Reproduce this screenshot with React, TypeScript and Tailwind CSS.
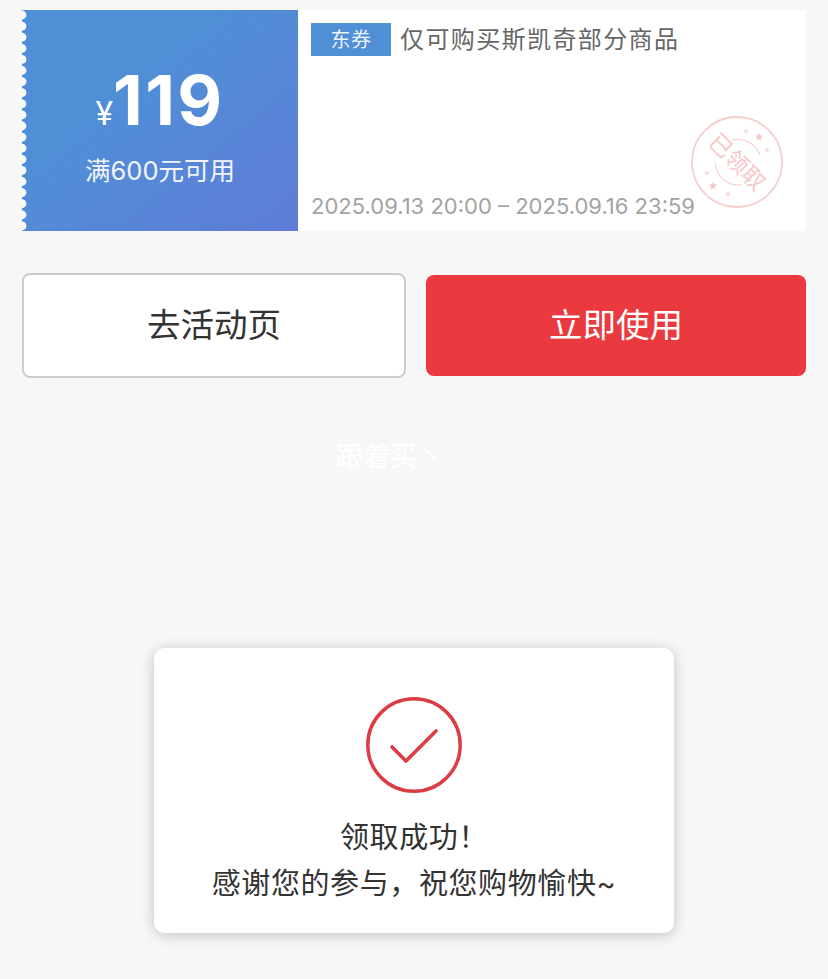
const cjk = "font-['Inter','Noto_Sans_CJK_SC',sans-serif]";

function Scallops() {
  // little bites down the left edge of the coupon
  const bites = Array.from({ length: 20 }, (_, i) => 5 + i * 11.1);
  return (
    <svg className="absolute left-0 top-0 h-[221px] w-[6px]" viewBox="0 0 6 221">
      {bites.map((y) => (
        <circle key={y} cx="0" cy={y} r="4.4" fill="#fafafa" />
      ))}
    </svg>
  );
}

function Star({ x, y, r, fill }: { x: number; y: number; r: number; fill: string }) {
  const pts = Array.from({ length: 10 }, (_, i) => {
    const a = (Math.PI / 5) * i - Math.PI / 2;
    const d = i % 2 === 0 ? r : r * 0.45;
    return `${x + d * Math.cos(a)},${y + d * Math.sin(a)}`;
  }).join(" ");
  return <polygon points={pts} fill={fill} />;
}

function Stamp() {
  return (
    <div className="absolute left-[393px] top-[106px] h-[92px] w-[92px]">
      <svg className="absolute inset-0" width="92" height="92" viewBox="0 0 92 92" fill="none">
        <circle cx="46" cy="46" r="45" stroke="#f6cfcf" strokeWidth="1.8" />
        <path d="M41 24a24 24 0 0 1 28 15" stroke="#f6d3d3" strokeWidth="1.2" />
        <path d="M24 47a24 24 0 0 0 27 22" stroke="#f6d3d3" strokeWidth="1.2" />
        <Star x={55} y={15} r={3} fill="#f8d8d8" />
        <Star x={68} y={21} r={4.5} fill="#f6c9c9" />
        <Star x={76} y={34} r={3} fill="#f8d8d8" />
        <Star x={16} y={57} r={3} fill="#f8d8d8" />
        <Star x={22} y={70} r={4.5} fill="#f6c9c9" />
        <Star x={37} y={78} r={3} fill="#f8d8d8" />
      </svg>
      <div className="absolute inset-0 flex rotate-45 items-center justify-center text-[23px] leading-none text-[#f6c8c8]">
        已领取
      </div>
    </div>
  );
}

export default function App() {
  return (
    <div className={`relative h-[979px] w-[828px] overflow-hidden bg-[#f7f7f7] ${cjk}`}>
      <div className="px-[22px] pt-[10px]">
        <div className="flex h-[221px]">
          <div className="relative flex w-[276px] flex-col items-center bg-gradient-to-br from-[#4f8fd6] from-35% to-[#5f7cd8] text-white">
            <Scallops />
            <div className="mt-[54px] flex h-[72px] items-end">
              <span className="mb-[5px] text-[32px] leading-[34px]">¥</span>
              <span className="text-[69px] font-bold leading-[72px] tracking-[2.4px]">119</span>
            </div>
            <div className="mt-[19px] text-[25.5px] leading-[32px] text-[#f2f5fc]">满600元可用</div>
          </div>
          <div className="relative flex flex-1 flex-col justify-between bg-white pb-[11px] pl-[13px] pt-[13px]">
            <div className="flex items-center gap-[9px]">
              <span className="flex h-[33px] w-[80px] items-center justify-center bg-[#4f8fd6] text-[20px] tracking-[0.5px] text-[#eaf2fb]">
                东券
              </span>
              <span className="text-[24px] leading-[33px] tracking-[1.4px] text-[#666666]">仅可购买斯凯奇部分商品</span>
            </div>
            <div className="text-[22px] leading-[28px] text-[#a3a3a3]">2025.09.13 20:00 – 2025.09.16 23:59</div>
            <Stamp />
          </div>
        </div>

        <div className="mt-[42px] flex items-center gap-[20px]">
          <button
            type="button"
            className="h-[105px] w-[384px] rounded-[8px] border-2 border-[#cccccc] bg-white text-[33.5px] text-[#333333]"
          >
            去活动页
          </button>
          <button type="button" className="h-[101px] w-[380px] rounded-[8px] bg-[#ea3a40] text-[33.5px] text-white">
            立即使用
          </button>
        </div>

        <div className="mt-[62px] flex justify-center pr-[48px] text-[27px] leading-[34px] text-white">跟着买丶</div>
      </div>

      <div className="mx-auto mt-[174px] flex h-[285px] w-[520px] flex-col items-center rounded-[10px] bg-white pt-[48px] shadow-[0_2px_14px_rgba(0,0,0,0.22)]">
        <svg width="98" height="98" viewBox="0 0 98 98" fill="none">
          <circle cx="49" cy="49" r="46.2" stroke="#dd3c42" strokeWidth="3.5" />
          <path d="M27 51l14 14 30-30" stroke="#dd3c42" strokeWidth="3.6" strokeLinecap="round" strokeLinejoin="round" />
        </svg>
        <div className="mt-[21px] text-center text-[29px] leading-[46px] tracking-[0.6px] text-[#333333]">
          <div>领取成功！</div>
          <div>感谢您的参与，祝您购物愉快~</div>
        </div>
      </div>
    </div>
  );
}
